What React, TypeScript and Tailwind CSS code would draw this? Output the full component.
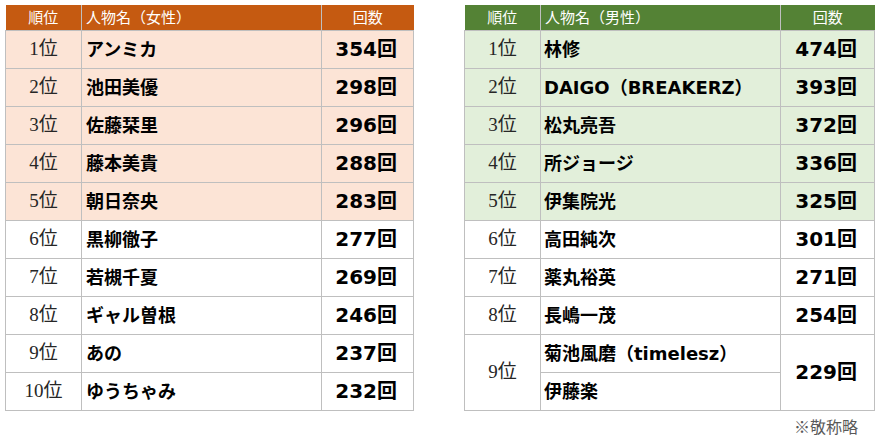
const WOMEN = [
  { rank: "1位", name: "アンミカ", count: "354回", hi: true },
  { rank: "2位", name: "池田美優", count: "298回", hi: true },
  { rank: "3位", name: "佐藤栞里", count: "296回", hi: true },
  { rank: "4位", name: "藤本美貴", count: "288回", hi: true },
  { rank: "5位", name: "朝日奈央", count: "283回", hi: true },
  { rank: "6位", name: "黒柳徹子", count: "277回", hi: false },
  { rank: "7位", name: "若槻千夏", count: "269回", hi: false },
  { rank: "8位", name: "ギャル曽根", count: "246回", hi: false },
  { rank: "9位", name: "あの", count: "237回", hi: false },
  { rank: "10位", name: "ゆうちゃみ", count: "232回", hi: false },
];

const MEN = [
  { rank: "1位", name: "林修", count: "474回", hi: true },
  { rank: "2位", name: "DAIGO（BREAKERZ）", count: "393回", hi: true },
  { rank: "3位", name: "松丸亮吾", count: "372回", hi: true },
  { rank: "4位", name: "所ジョージ", count: "336回", hi: true },
  { rank: "5位", name: "伊集院光", count: "325回", hi: true },
  { rank: "6位", name: "高田純次", count: "301回", hi: false },
  { rank: "7位", name: "薬丸裕英", count: "271回", hi: false },
  { rank: "8位", name: "長嶋一茂", count: "254回", hi: false },
];

const rankFont = "font-['Liberation_Serif','Noto_Sans_CJK_JP',serif] text-[19px] text-[#262626]";
const nameFont = "font-['DejaVu_Sans','Noto_Sans_CJK_JP',sans-serif] font-bold text-[18px] text-black";
const countFont = "font-['DejaVu_Sans','Noto_Sans_CJK_JP',sans-serif] font-bold text-[20px] text-black";
const cell = "border border-[#bfbfbf]";

function Header({ label, color }: { label: string; color: string }) {
  return (
    <tr className={`h-[25px] text-white text-[15px] font-['Noto_Sans_CJK_JP',sans-serif] ${color}`}>
      <th className="font-normal text-center border-r border-[#bfbfbf]">順位</th>
      <th className="font-normal text-left pl-[4px] border-r border-[#bfbfbf]">{label}</th>
      <th className="font-normal text-center">回数</th>
    </tr>
  );
}

export default function App() {
  return (
    <div className="w-[882px] h-[445px] bg-white">
      <div className="flex items-start pt-[5px]">
        <table className="ml-[5px] w-[408px] border-collapse table-fixed">
          <colgroup>
            <col className="w-[76px]" />
            <col className="w-[240px]" />
            <col className="w-[92px]" />
          </colgroup>
          <thead>
            <Header label="人物名（女性）" color="bg-[#c55a11]" />
          </thead>
          <tbody>
            {WOMEN.map((r) => (
              <tr key={r.rank} className={`h-[38px] ${r.hi ? "bg-[#fce4d6]" : "bg-white"}`}>
                <td className={`${cell} text-center ${rankFont}`}>{r.rank}</td>
                <td className={`${cell} pl-[4px] ${nameFont}`}>{r.name}</td>
                <td className={`${cell} text-right pr-[16px] ${countFont}`}>{r.count}</td>
              </tr>
            ))}
          </tbody>
        </table>

        <table className="ml-[50px] w-[410px] border-collapse table-fixed">
          <colgroup>
            <col className="w-[76px]" />
            <col className="w-[240px]" />
            <col className="w-[94px]" />
          </colgroup>
          <thead>
            <Header label="人物名（男性）" color="bg-[#548235]" />
          </thead>
          <tbody>
            {MEN.map((r) => (
              <tr key={r.rank} className={`h-[38px] ${r.hi ? "bg-[#e2efda]" : "bg-white"}`}>
                <td className={`${cell} text-center ${rankFont}`}>{r.rank}</td>
                <td className={`${cell} pl-[3px] whitespace-nowrap ${nameFont}`}>{r.name}</td>
                <td className={`${cell} text-right pr-[17px] ${countFont}`}>{r.count}</td>
              </tr>
            ))}
            <tr className="h-[38px]">
              <td rowSpan={2} className={`${cell} text-center ${rankFont}`}>9位</td>
              <td className={`${cell} pl-[3px] whitespace-nowrap ${nameFont}`}>菊池風磨（timelesz）</td>
              <td rowSpan={2} className={`${cell} text-right pr-[17px] ${countFont}`}>229回</td>
            </tr>
            <tr className="h-[38px]">
              <td className={`${cell} pl-[3px] ${nameFont}`}>伊藤楽</td>
            </tr>
          </tbody>
        </table>
      </div>
      <div className="flex justify-end pr-[24px] pt-[4px] text-[16px] text-[#595959] font-['Noto_Sans_CJK_JP',sans-serif] leading-[22px]">
        ※敬称略
      </div>
    </div>
  );
}
